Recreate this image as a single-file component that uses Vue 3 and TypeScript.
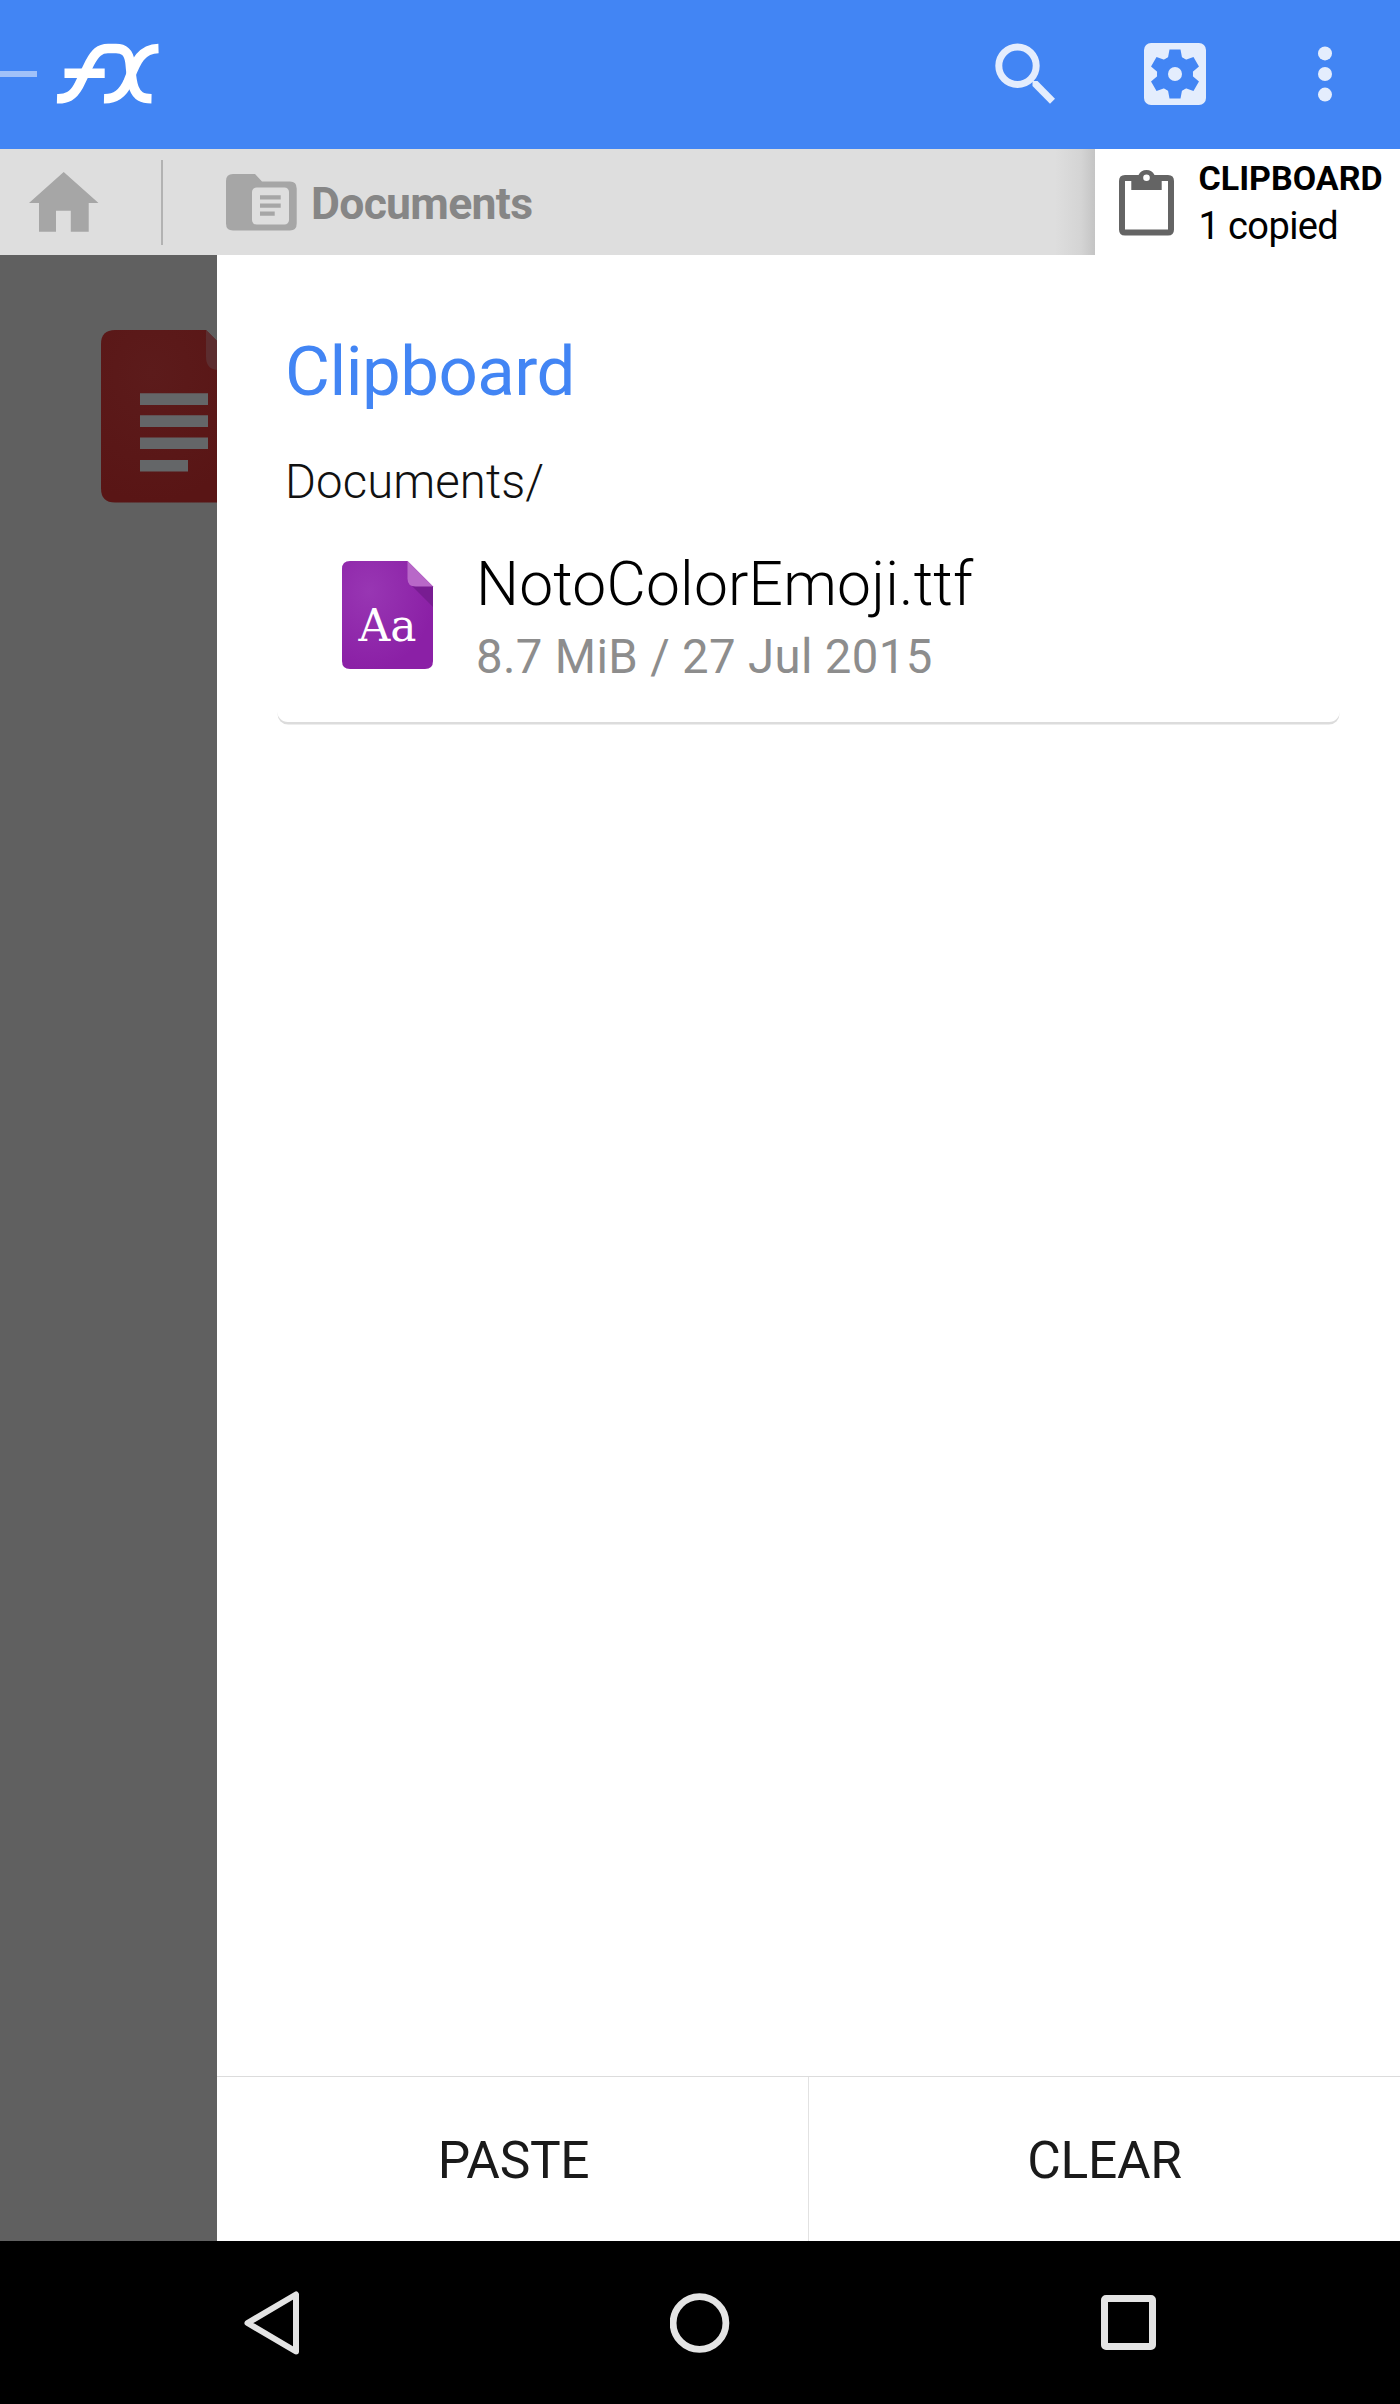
<script setup lang="ts">
interface ClipItem {
  name: string
  meta: string
}

const location = 'Documents/'
const items: ClipItem[] = [{ name: 'NotoColorEmoji.ttf', meta: '8.7 MiB / 27 Jul 2015' }]
const actions: string[] = ['PASTE', 'CLEAR']
</script>

<template>
  <div class="screen">
    <header class="appbar">
      <i class="drawer-hint"></i>
      <svg class="logo" width="104" height="64" viewBox="0 0 104 64" fill="none" stroke="#fff" stroke-width="9.6">
        <path d="M2 56.700C12 57 18 54 23.500 44L35 20.500C40 11 44.500 6.500 53 6.500L61 6.500C69 6.500 73.500 10 75 20C76 28 76 38 79 46C82 54 87 56.500 96.500 56.700" />
        <path d="M9.500 31.200H49.700" />
        <path d="M49 56.700C61 57 68 51 73 40C80 23 84 7 103.500 6.500" />
      </svg>
      <div class="tools">
        <svg width="60" height="62" viewBox="0 0 60 62">
          <circle cx="22.500" cy="22.800" r="18.700" fill="none" stroke="#e4edfd" stroke-width="7" />
          <path d="M37.500 38H42.500L60 55.700L55 60.700L37.500 43Z" fill="#e4edfd" />
        </svg>
        <svg width="62" height="62" viewBox="0 0 62 62">
          <rect width="62" height="62" rx="7" fill="#e4edfd" />
          <g fill="#4285f4" transform="translate(31 31)">
            <circle r="18" />
            <path v-for="n in 6" :key="n" d="M-11 -13L-7 -16.500L-5.500 -24.500H5.500L7 -16.500L11 -13Z" :transform="`rotate(${n * 60})`" />
          </g>
          <circle cx="31" cy="31" r="7" fill="#e4edfd" />
        </svg>
        <svg width="14" height="56" viewBox="0 0 14 56" fill="#e4edfd">
          <circle cx="7" cy="7.400" r="7" />
          <circle cx="7" cy="28" r="7" />
          <circle cx="7" cy="48.600" r="7" />
        </svg>
      </div>
    </header>

    <nav class="crumbs">
      <svg class="home" width="70" height="60" viewBox="0 0 70 60">
        <path d="M34.700 0L69.500 31H59.700V59.800H41.800V38.800H27V59.800H10V31H0Z" fill="#a6a6a6" />
      </svg>
      <i class="sep"></i>
      <svg class="folder" width="71" height="57" viewBox="0 0 71 57">
        <path d="M7 0H29L36 7.500H64Q70.700 7.500 70.700 14.500V49.500Q70.700 56.500 64 56.500H7Q0 56.500 0 49.500V7Q0 0 7 0Z" fill="#a6a6a6" />
        <rect x="26" y="13.500" width="37" height="37" rx="4.500" fill="#dedede" />
        <path d="M34 21.300H54.700V25.500H34ZM34 29.500H54.700V33.700H34ZM34 37.500H48.700V41.700H34Z" fill="#a6a6a6" />
      </svg>
      <span class="crumb">Documents</span>
      <div class="cliptab">
        <svg width="56" height="69" viewBox="0 0 56 69">
          <path fill-rule="evenodd" fill="#646464" d="M6 7H19.500A9 9 0 0 1 35.500 7H49Q55 7 55 13V61.500Q55 67.500 49 67.500H6Q0 67.500 0 61.500V13Q0 7 6 7ZM12.300 13H6V61.500H49V13H42.700V22H12.300ZM27.500 6.500A3.300 3.300 0 1 0 27.500 13.100A3.300 3.300 0 1 0 27.500 6.500Z" />
        </svg>
        <div class="cliptext">
          <b>CLIPBOARD</b>
          <span>1 copied</span>
        </div>
      </div>
    </nav>

    <main class="body">
      <aside class="scrim">
        <svg width="116" height="173" viewBox="0 0 116 173">
          <defs>
            <radialGradient id="red" cx="0.35" cy="0.25" r="0.75">
              <stop offset="0" stop-color="#5c1b1b" />
              <stop offset="1" stop-color="#591515" />
            </radialGradient>
          </defs>
          <path d="M14 0H105L145 40V172.500H14Q0 172.500 0 158.500V14Q0 0 14 0Z" fill="url(#red)" />
          <path d="M105 0L145 40H118Q105 40 105 27Z" fill="#5c2d2f" />
          <path d="M39 63.300H107V75H39ZM39 85.300H107V97H39ZM39 107.500H107V119H39ZM39 130H87V141.500H39Z" fill="#646668" />
        </svg>
      </aside>

      <section class="panel">
        <h1>Clipboard</h1>
        <p class="path">{{ location }}</p>
        <article v-for="item in items" :key="item.name" class="card">
          <svg width="92" height="108" viewBox="0 0 92 108">
            <defs>
              <radialGradient id="purple" cx="0.3" cy="0.28" r="0.72">
                <stop offset="0" stop-color="#9836b3" />
                <stop offset="1" stop-color="#8b20a6" />
              </radialGradient>
            </defs>
            <path d="M8 0H65.500L91 25.500V100Q91 108 83 108H8Q0 108 0 100V8Q0 0 8 0Z" fill="url(#purple)" />
            <path d="M70 25L91 46V25Z" fill="#781d92" />
            <path d="M65.500 0L91 25.500H73.500Q65.500 25.500 65.500 17.500Z" fill="#b868c8" />
            <text x="45.500" y="79.500" text-anchor="middle" textLength="58" lengthAdjust="spacingAndGlyphs" fill="#fff" font-family="DejaVu Serif, serif" font-size="44">Aa</text>
          </svg>
          <div>
            <div class="name">{{ item.name }}</div>
            <div class="meta">{{ item.meta }}</div>
          </div>
        </article>
        <footer class="actions">
          <button v-for="a in actions" :key="a" type="button"><span>{{ a }}</span></button>
        </footer>
      </section>
    </main>

    <footer class="sysnav">
      <svg width="56" height="64" viewBox="0 0 56 64" fill="none" stroke="#e4e4e4" stroke-width="6" stroke-linejoin="round">
        <path d="M53 3.500V60.500L4.500 32Z" />
      </svg>
      <svg width="60" height="60" viewBox="0 0 60 60" fill="none" stroke="#e4e4e4" stroke-width="6.800">
        <circle cx="29.500" cy="30" r="26.400" />
      </svg>
      <svg width="55" height="55" viewBox="0 0 55 55" fill="none" stroke="#e4e4e4" stroke-width="7">
        <rect x="3.500" y="3.500" width="48" height="48" rx="1.500" />
      </svg>
    </footer>
  </div>
</template>

<style>
body {
  margin: 0;
}
</style>

<style scoped>
.screen {
  width: 1400px;
  height: 2404px;
  display: flex;
  flex-direction: column;
  overflow: hidden;
  background: #fff;
  font-family: Roboto, "Liberation Sans", sans-serif;
}
svg {
  display: block;
  flex: none;
}
.appbar {
  height: 149px;
  flex: none;
  display: flex;
  align-items: center;
  background: #4285f4;
}
.drawer-hint {
  width: 37px;
  height: 6px;
  margin-top: -1px;
  background: #a0c1f9;
}
.logo {
  margin: -1px 0 0 18px;
}
.tools {
  margin: -1px 68px 0 auto;
  display: flex;
  align-items: center;
}
.tools svg:nth-child(2) {
  margin-left: 89px;
}
.tools svg:nth-child(3) {
  margin-left: 112px;
}
.crumbs {
  height: 106px;
  flex: none;
  display: flex;
  align-items: center;
  background: linear-gradient(to left, #c4c4c4 0, #d4d4d4 14px, #dedede 40px) 0 0 / 1095px 100% no-repeat #dedede;
}
.home {
  margin: 0 0 0 29px;
}
.sep {
  width: 2px;
  height: 85px;
  margin: 0 0 0 62px;
  background: #b2b2b2;
}
.folder {
  margin-left: 63px;
}
.crumb {
  margin: 3px 0 0 14px;
  font-size: 44.5px;
  font-weight: 700;
  line-height: 60px;
  letter-spacing: -0.7px;
  color: #868686;
}
.cliptab {
  box-sizing: border-box;
  width: 305px;
  height: 106px;
  margin-left: auto;
  padding-left: 24px;
  display: flex;
  align-items: center;
  background: #fff;
  color: #000;
}
.cliptext {
  margin-left: 23.5px;
  white-space: nowrap;
}
.cliptext b,
.cliptext span {
  display: block;
}
.cliptext b {
  font-size: 34px;
  line-height: 48px;
}
.cliptext span {
  font-size: 38px;
  line-height: 48px;
  letter-spacing: -0.6px;
}
.body {
  flex: 1;
  display: flex;
}
.scrim {
  width: 217px;
  box-sizing: border-box;
  padding: 75px 0 0 101px;
  background: #606060;
}
.panel {
  flex: 1;
  display: flex;
  flex-direction: column;
  padding-top: 77px;
}
h1 {
  margin: 0 0 40px 68px;
  font-size: 69px;
  line-height: 80px;
  font-weight: 400;
  letter-spacing: -0.5px;
  color: #4285f4;
}
.path {
  margin: 0 0 0 68px;
  font-size: 47.3px;
  line-height: 60px;
  font-weight: 300;
  letter-spacing: 0.1px;
  color: #111;
}
.card {
  box-sizing: border-box;
  width: 1063px;
  height: 210px;
  margin-left: 60px;
  padding: 38px 0 0 65px;
  display: flex;
  border-radius: 11px;
  box-shadow: 0 3px 0 -0.5px #dcdcdc;
  clip-path: inset(0 0 -4px 0);
}
.card > svg {
  margin-top: 11px;
}
.card > div {
  margin-left: 42px;
}
.name {
  font-size: 60.5px;
  line-height: 70px;
  font-weight: 300;
  letter-spacing: 0.2px;
  color: #000;
}
.meta {
  margin-top: 7px;
  font-size: 47.3px;
  line-height: 60px;
  letter-spacing: 0.35px;
  color: #8d8d8d;
}
.actions {
  height: 164px;
  margin-top: auto;
  display: flex;
  border-top: 1px solid #dcdcdc;
}
.actions button {
  flex: 1;
  border: 0;
  padding: 3px 0 0;
  background: none;
  font: 400 51.5px/60px Roboto, sans-serif;
  letter-spacing: -0.3px;
  color: #1a1a1a;
}
.actions button:first-child span {
  margin-left: 2px;
}
.actions button + button {
  border-left: 1px solid #e2e2e2;
}
.sysnav {
  box-sizing: border-box;
  height: 163px;
  flex: none;
  padding: 0 244px 0 243px;
  display: flex;
  align-items: center;
  justify-content: space-between;
  background: #000;
}
</style>
